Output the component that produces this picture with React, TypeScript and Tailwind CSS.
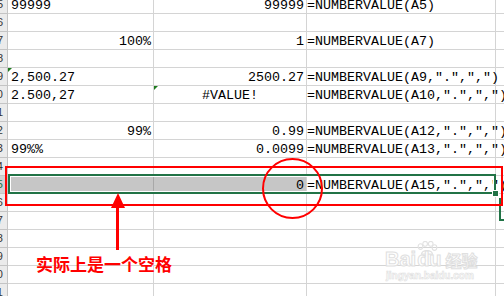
import React from "react";

type Row = {
  n: number;
  a?: string;
  aAlign?: "left" | "right";
  b?: string;
  bAlign?: "right" | "center";
  c?: string;
  triA?: boolean;
  triB?: boolean;
  sel?: boolean;
};

const rows: Row[] = [
  { n: 5, a: "99999", aAlign: "left", b: "99999", c: "=NUMBERVALUE(A5)" },
  { n: 6 },
  { n: 7, a: "100%", aAlign: "right", b: "1", c: "=NUMBERVALUE(A7)" },
  { n: 8 },
  { n: 9, a: "2,500.27", aAlign: "left", b: "2500.27", c: '=NUMBERVALUE(A9,".",",")', triA: true },
  { n: 10, a: "2.500,27", aAlign: "left", b: "#VALUE!", bAlign: "center", c: '=NUMBERVALUE(A10,".",",")', triB: true },
  { n: 11 },
  { n: 12, a: "99%", aAlign: "right", b: "0.99", c: '=NUMBERVALUE(A12,".",",")' },
  { n: 13, a: "99%%", aAlign: "left", b: "0.0099", c: '=NUMBERVALUE(A13,".",",")' },
  { n: 14 },
  { n: 15, a: " ", aAlign: "left", b: "0", c: '=NUMBERVALUE(A15,".",",")', sel: true },
  { n: 16 },
  { n: 17 },
  { n: 18 },
  { n: 19 },
  { n: 20 },
  { n: 21 },
  { n: 22 },
];

const mono = { fontFamily: '"Liberation Mono", "DejaVu Sans Mono", monospace' };

function GridRow({ r }: { r: Row }) {
  return (
    <div className="flex h-[18px] shrink-0">
      <div
        className={`w-[8px] shrink-0 h-full border-r border-b border-[#c4c4c4] overflow-hidden flex justify-end pr-[4px] text-[11px] leading-[17px] ${
          r.sel ? "bg-[#d2d2d2] text-[#217346]" : "bg-[#ebebeb] text-[#333]"
        }`}
        style={{ fontFamily: '"Liberation Sans", Arial, sans-serif' }}
      >
        <span className="whitespace-nowrap">{r.n}</span>
      </div>
      <div
        className={`relative w-[146px] shrink-0 h-full border-r border-b border-[#d4d4d4] ${
          r.sel ? "bg-[#c6c6c6] border-r-[#a8a8a8]" : "bg-white"
        }`}
      >
        {r.triA && (
          <div className="absolute left-0 top-0 w-0 h-0 border-t-[4px] border-r-[4px] border-t-[#1e7b1e] border-r-transparent" />
        )}
        {r.a && (
          <div
            className={`h-full pt-[2px] text-[13.33px] leading-[15px] text-black whitespace-nowrap ${
              r.aAlign === "right" ? "text-right pr-[2px]" : "text-left pl-[3px]"
            }`}
            style={mono}
          >
            {r.a}
          </div>
        )}
      </div>
      <div
        className={`relative w-[153px] shrink-0 h-full border-r border-b border-[#d4d4d4] ${
          r.sel ? "bg-[#c6c6c6]" : "bg-white"
        }`}
      >
        {r.triB && (
          <div className="absolute left-0 top-0 w-0 h-0 border-t-[4px] border-r-[4px] border-t-[#1e7b1e] border-r-transparent" />
        )}
        {r.b && (
          <div
            className={`h-full pt-[2px] text-[13.33px] leading-[15px] text-black whitespace-nowrap ${
              r.bAlign === "center" ? "text-center" : "text-right pr-[2px]"
            }`}
            style={mono}
          >
            {r.b}
          </div>
        )}
      </div>
      <div className="relative w-[189px] shrink-0 h-full border-r border-b border-[#d4d4d4] bg-white">
        {r.c && (
          <div
            className="relative z-10 h-full pt-[2px] text-[13.33px] leading-[15px] text-black whitespace-nowrap"
            style={mono}
          >
            {r.c}
          </div>
        )}
      </div>
      <div className="w-[40px] shrink-0 h-full border-b border-[#d4d4d4] bg-white" />
    </div>
  );
}

export default function App() {
  return (
    <div className="relative w-[504px] h-[296px] overflow-hidden bg-white">
      <div className="flex flex-col mt-[-4px]">
        {rows.map((r) => (
          <GridRow key={r.n} r={r} />
        ))}
      </div>

      {/* selection box */}
      <div className="absolute left-[8px] top-[174px] w-[488px] h-[20px] border-2 border-[#217346] z-20">
        <div className="absolute inset-0 border border-white" />
      </div>
      <div className="absolute left-[492px] top-[190px] w-[7px] h-[7px] bg-[#217346] border border-white z-30" />

      {/* small green object border at right */}
      <div className="absolute left-[499px] top-[198px] w-[10px] h-[23px] border-l-2 border-b-2 border-[#217346]" />

      {/* red rectangle */}
      <div className="absolute left-[5px] top-[166px] w-[498px] h-[40px] border-2 border-[#ff0000] z-30" />

      {/* red circle */}
      <div className="absolute left-[262px] top-[158px] w-[61px] h-[61px] rounded-full border-2 border-[#ff0000] z-30" />

      {/* arrow */}
      <svg className="absolute left-[111px] top-[193px] z-40" width="14" height="16" viewBox="0 0 14 16">
        <polygon points="7,0 14,15 0,15" fill="#ff0000" />
      </svg>
      <div className="absolute left-[116px] top-[206px] w-[3px] h-[44px] bg-[#ff0000] z-40" />

      {/* annotation text */}
      <div
        className="absolute left-[36px] top-[254px] text-[17px] leading-[20px] font-bold text-[#ff0000] whitespace-nowrap z-40"
        style={{ fontFamily: '"Noto Sans CJK SC", "Noto Sans", sans-serif' }}
      >
        实际上是一个空格
      </div>

      {/* watermark */}
      <div className="absolute left-[385px] top-[241px] w-[92px] h-[44px] z-40 pointer-events-none flex flex-col items-start">
        <svg className="ml-[30px]" width="24" height="14" viewBox="0 0 24 15">
          <g fill="none" stroke="#e2e2e2" strokeWidth="1.2">
            <ellipse cx="5" cy="6" rx="2.5" ry="3" />
            <ellipse cx="10" cy="3" rx="2.5" ry="2.6" />
            <ellipse cx="16" cy="3" rx="2.5" ry="2.6" />
            <ellipse cx="20" cy="7" rx="2.5" ry="3" />
            <path d="M6 14 C7 9, 17 9, 18 14 Z" />
          </g>
        </svg>
        <div
          className="-mt-[5px] flex items-end text-[20px] leading-[18px] font-bold text-white whitespace-nowrap"
          style={{
            fontFamily: '"Liberation Sans", Arial, sans-serif',
            WebkitTextStroke: "1px #e0e0e0",
          }}
        >
          <span>Bai</span>
          <span className="ml-[1px]">du</span>
          <span
            className="ml-[4px] text-[16px] leading-[16px]"
            style={{ fontFamily: '"Noto Sans CJK SC", sans-serif' }}
          >
            经验
          </span>
        </div>
        <div
          className="mt-[2px] ml-[1px] text-[10px] leading-[11px] font-bold text-white whitespace-nowrap"
          style={{
            fontFamily: '"Liberation Sans", Arial, sans-serif',
            WebkitTextStroke: "0.6px #e0e0e0",
          }}
        >
          jingyan.baidu.com
        </div>
      </div>
    </div>
  );
}
